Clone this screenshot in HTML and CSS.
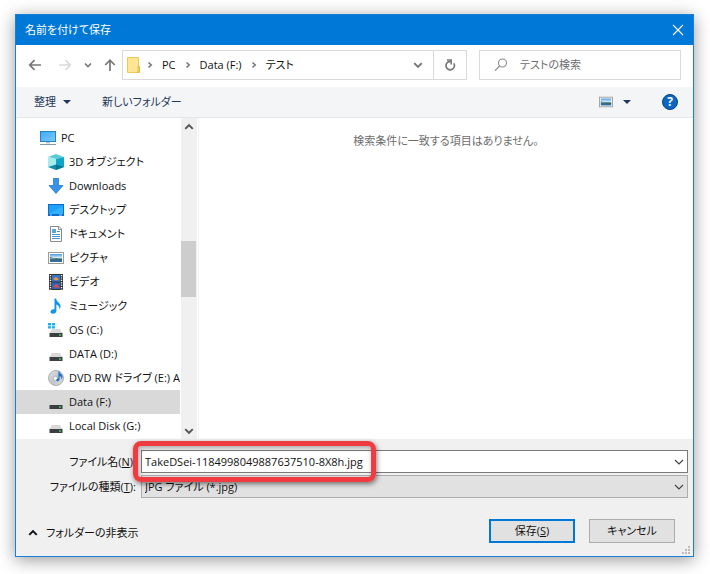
FILE: index.html
```html
<!DOCTYPE html>
<html lang="ja">
<head>
    <meta charset="UTF-8">
    <meta name="viewport" content="width=device-width, initial-scale=1.0">
    <title>名前を付けて保存</title>
    <link rel="stylesheet" href="styles.css">
</head>
<body>
    <svg class="defs" width="0" height="0" aria-hidden="true">
        <defs>
            <linearGradient id="screen" x1="0" y1="0" x2="1" y2="1">
                <stop offset="0" stop-color="#3fa9f5"/>
                <stop offset="1" stop-color="#7ccbfb"/>
            </linearGradient>
            <linearGradient id="sky" x1="0" y1="0" x2="0" y2="1">
                <stop offset="0" stop-color="#4a9be0"/>
                <stop offset="0.5" stop-color="#e2f2fb"/>
                <stop offset="0.6" stop-color="#3c6e78"/>
                <stop offset="1" stop-color="#2f6fae"/>
            </linearGradient>
            <linearGradient id="disc" x1="0" y1="0" x2="1" y2="1">
                <stop offset="0" stop-color="#e8e8e8"/>
                <stop offset="0.5" stop-color="#bfc5ca"/>
                <stop offset="1" stop-color="#dedede"/>
            </linearGradient>
            <symbol id="chevron" viewBox="0 0 8 8">
                <path d="M1 2.5 L4 5.5 L7 2.5" fill="none" stroke="currentColor" stroke-width="1.6"/>
            </symbol>
            <symbol id="chevron-right" viewBox="0 0 8 8">
                <path d="M2.5 1.5 L5.2 4 L2.5 6.5" fill="none" stroke="currentColor" stroke-width="1.6"/>
            </symbol>
            <symbol id="chevron-thin" viewBox="0 0 10 10">
                <path d="M1 3 L5 7 L9 3" fill="none" stroke="currentColor" stroke-width="1.2"/>
            </symbol>
            <symbol id="picture" viewBox="0 0 16 16">
                <rect x="0.5" y="2.5" width="15" height="11" fill="#fff" stroke="#9a9a9a"/>
                <rect x="2" y="4" width="12" height="8" fill="url(#sky)"/>
                <path d="M2 8 Q5 7 8 9 L14 10 V9.4 Q9 9 2 7z" fill="#2b5b46"/>
            </symbol>
            <symbol id="drive" viewBox="0 0 16 16">
                <path d="M4 7 H12 L14.5 11 H1.5z" fill="#d9d9d9"/>
                <rect x="1.5" y="11" width="13" height="4" fill="#3c3f42"/>
                <rect x="11" y="12.4" width="2" height="1.3" fill="#3fe25c"/>
            </symbol>
        </defs>
    </svg>

    <div class="dialog" role="dialog" aria-labelledby="dialog-title">
        <header class="title-bar">
            <h1 id="dialog-title">名前を付けて保存</h1>
            <button class="close-btn" type="button" aria-label="閉じる">
                <svg width="12" height="12" viewBox="0 0 12 12"><path d="M1 1 L11 11 M11 1 L1 11" stroke="#fff" stroke-width="1.1"/></svg>
            </button>
        </header>

        <nav class="address-row">
            <div class="nav-buttons">
                <button type="button" aria-label="戻る">
                    <svg width="14" height="12" viewBox="0 0 14 12"><path d="M13 6 H2 M6.5 1.2 L1.7 6 L6.5 10.8" fill="none" stroke="#777" stroke-width="1.7"/></svg>
                </button>
                <button type="button" aria-label="進む" disabled>
                    <svg width="14" height="12" viewBox="0 0 14 12"><path d="M1 6 H12 M7.5 1.2 L12.3 6 L7.5 10.8" fill="none" stroke="#dadada" stroke-width="1.7"/></svg>
                </button>
                <button class="history-btn" type="button" aria-label="最近表示した場所">
                    <svg width="8" height="8"><use href="#chevron"/></svg>
                </button>
                <button class="up-btn" type="button" aria-label="上へ">
                    <svg width="12" height="14" viewBox="0 0 12 14"><path d="M6 13 V2.5 M1.2 7 L6 2.2 L10.8 7" fill="none" stroke="#777" stroke-width="1.7"/></svg>
                </button>
            </div>
            <div class="address-bar">
                <svg class="folder-icon" width="14" height="16" viewBox="0 0 14 16">
                    <path d="M0.5 0.5 H11.5 V15.5 H0.5z" fill="#ffe594" stroke="#efca58"/>
                    <path d="M11 9.5 H12.5 V15.5 H11z" fill="#fbe08a" stroke="#e0b83c"/>
                </svg>
                <ol class="crumbs">
                    <li><svg width="8" height="8"><use href="#chevron-right"/></svg><a href="#">PC</a></li>
                    <li><svg width="8" height="8"><use href="#chevron-right"/></svg><a href="#">Data (F:)</a></li>
                    <li><svg width="8" height="8"><use href="#chevron-right"/></svg><a href="#">テスト</a></li>
                </ol>
                <button class="drop-btn" type="button" aria-label="以前の場所">
                    <svg width="10" height="10"><use href="#chevron"/></svg>
                </button>
                <button class="refresh-btn" type="button" aria-label="最新の情報に更新">
                    <svg width="12" height="12" viewBox="0 0 12 12">
                        <path d="M9.8 4.4 A4.2 4.2 0 1 1 4.4 2.8 L7.2 2.4" fill="none" stroke="#777" stroke-width="1.7"/>
                        <path d="M3 1 H7.2 V5.4" fill="none" stroke="#777" stroke-width="1.5"/>
                    </svg>
                </button>
            </div>
            <label class="search-box">
                <svg width="14" height="14" viewBox="0 0 14 14"><circle cx="8.5" cy="5" r="4" fill="none" stroke="#8a8a8a" stroke-width="1.1"/><path d="M5.6 8 L1 12.6" stroke="#8a8a8a" stroke-width="1.2"/></svg>
                <input type="search" placeholder="テストの検索" aria-label="テストの検索">
            </label>
        </nav>

        <div class="toolbar">
            <button type="button">整理<span class="caret"></span></button>
            <button type="button">新しいフォルダー</button>
            <button class="view-btn" type="button" aria-label="表示方法">
                <svg width="14" height="14"><use href="#picture"/></svg><span class="caret"></span>
            </button>
            <button class="help-btn" type="button" aria-label="ヘルプ">?</button>
        </div>

        <div class="content">
            <div class="sidebar">
                <ul class="tree">
                    <li class="root"><a href="#">
                        <svg width="16" height="16" viewBox="0 0 16 16"><rect x="0.5" y="1.5" width="15" height="10" fill="url(#screen)" stroke="#2584c6"/><rect x="6" y="12" width="4" height="1.5" fill="#b7c3cc"/><rect x="0" y="14" width="16" height="1" fill="#8399a8"/></svg>
                        PC</a></li>
                    <li><a href="#">
                        <svg width="16" height="16" viewBox="0 0 16 16"><path d="M8 0 L16 3 L8 5 L0 3z" fill="#58cbd8"/><path d="M0 3 L8 5 V16 L0 13z" fill="#a5ecef"/><path d="M8 5 L16 3 V13 L8 16z" fill="#0fa5c4"/><path d="M0 13 L8 10.6 V16z" fill="#128ba6"/><path d="M8 10.6 L16 13 L8 16z" fill="#0a7691"/></svg>
                        3D オブジェクト</a></li>
                    <li><a href="#">
                        <svg width="16" height="16" viewBox="0 0 16 16"><path d="M5.5 0.5 H10.5 V7.5 H15 L8 15.5 L1 7.5 H5.5z" fill="#3793e8" stroke="#2a7bd0" stroke-width="0.8"/></svg>
                        Downloads</a></li>
                    <li><a href="#">
                        <svg width="16" height="16" viewBox="0 0 16 16"><rect x="0" y="2" width="16" height="12" fill="#0b6fd0"/><rect x="1" y="3" width="14" height="9" fill="#1ea0fb"/><path d="M1 12 L15 4 V12z" fill="#31b1ff"/><path d="M2 13 H4 M11 13 H14" stroke="#cfe9ff" stroke-width="0.8"/></svg>
                        デスクトップ</a></li>
                    <li><a href="#">
                        <svg width="16" height="16" viewBox="0 0 16 16"><path d="M2.5 0.5 H11 L13.5 3 V15.5 H2.5z" fill="#fff" stroke="#8b8b8b"/><path d="M10.5 0.5 V3.5 H13.5" fill="none" stroke="#8b8b8b"/><rect x="4" y="3" width="4" height="4" fill="#54a6df"/><path d="M9 5.5 H12 M4 8.5 H12 M4 10.5 H12 M4 12.5 H12" stroke="#4a94cc"/></svg>
                        ドキュメント</a></li>
                    <li><a href="#">
                        <svg width="16" height="16"><use href="#picture"/></svg>
                        ピクチャ</a></li>
                    <li><a href="#">
                        <svg width="16" height="16" viewBox="0 0 16 16"><rect x="1" y="0" width="14" height="16" fill="#333"/><path d="M2.5 1 V16 M13.5 1 V16" stroke="#fff" stroke-width="1.4" stroke-dasharray="1.2 1.2"/><rect x="4" y="1" width="8" height="6.5" fill="#3974c9"/><rect x="4" y="8.5" width="8" height="6.5" fill="#2e62b8"/><path d="M5 5 L8 3 L11 5.5 L8 6.5z" fill="#e39a3b"/><path d="M5 13 L8 10 L10 11 L11 14z" fill="#d9513e"/></svg>
                        ビデオ</a></li>
                    <li><a href="#">
                        <svg width="16" height="16" viewBox="0 0 16 16"><path d="M6.5 0.5 H8 Q8.4 3 11 5 Q14 7.6 11.4 11.5 Q12 7.6 8.4 6.4 V12.8 Q8 15.6 5 15.8 Q2.2 15.6 2.6 13.2 Q3.4 10.8 6.5 11.2z" fill="#0f95f0"/></svg>
                        ミュージック</a></li>
                    <li><a href="#">
                        <svg width="16" height="16" viewBox="0 0 16 16"><use href="#drive"/><path d="M0 1 H3 V3.4 H0z M4 1 H7 V3.4 H4z M0 4.2 H3 V6.6 H0z M4 4.2 H7 V6.6 H4z" fill="#15b4f1"/></svg>
                        OS (C:)</a></li>
                    <li><a href="#">
                        <svg width="16" height="16"><use href="#drive"/></svg>
                        DATA (D:)</a></li>
                    <li><a href="#">
                        <svg width="16" height="16" viewBox="0 0 16 16"><circle cx="8" cy="8" r="7.5" fill="url(#disc)" stroke="#9a9fa3" stroke-width="0.8"/><circle cx="7.5" cy="8.5" r="2.2" fill="#fff" stroke="#a4aaae" stroke-width="0.8"/><path d="M11 1.5 Q12 3.6 14 5 Q15.4 7.4 13.4 9.4 Q13.8 6.6 11.6 5.8 V9.6 Q10.8 11.8 8.8 11.2 Q7.6 10 9 8.8 L10.4 8.6 V1.5z" fill="#1f6fc9"/></svg>
                        DVD RW ドライブ (E:) A</a></li>
                    <li class="selected"><a href="#" aria-current="true">
                        <svg width="16" height="16"><use href="#drive"/></svg>
                        Data (F:)</a></li>
                    <li><a href="#">
                        <svg width="16" height="16"><use href="#drive"/></svg>
                        Local Disk (G:)</a></li>
                </ul>
                <div class="scrollbar">
                    <button type="button" aria-label="上にスクロール"><svg class="flip" width="10" height="10"><use href="#chevron"/></svg></button>
                    <div class="track">
                        <div class="space-above"></div>
                        <div class="thumb"></div>
                        <div class="space-below"></div>
                    </div>
                    <button type="button" aria-label="下にスクロール"><svg width="10" height="10"><use href="#chevron"/></svg></button>
                </div>
            </div>
            <main class="file-list">
                <p>検索条件に一致する項目はありません。</p>
            </main>
        </div>

        <form class="save-form">
            <div class="fields">
                <label for="file-name">ファイル名(<u>N</u>):</label>
                <div class="combo name-combo">
                    <input type="text" id="file-name" name="fileName" value="TakeDSei-1184998049887637510-8X8h.jpg">
                    <svg width="10" height="10"><use href="#chevron-thin"/></svg>
                    <span class="highlight"></span>
                </div>
                <label for="file-type">ファイルの種類(<u>T</u>):</label>
                <div class="combo type-combo">
                    <select id="file-type" name="fileType">
                        <option>JPG ファイル (*.jpg)</option>
                    </select>
                    <svg width="10" height="10"><use href="#chevron-thin"/></svg>
                </div>
            </div>
            <div class="actions">
                <button class="hide-folders" type="button">
                    <svg class="flip" width="10" height="10"><use href="#chevron"/></svg>フォルダーの非表示
                </button>
                <button class="btn btn-default" type="submit">保存(<u>S</u>)</button>
                <button class="btn" type="button">キャンセル</button>
            </div>
            <svg class="grip" width="8" height="8" viewBox="0 0 8 8"><path d="M6 0h2v2h-2z M3 3h2v2h-2z M6 3h2v2h-2z M0 6h2v2h-2z M3 6h2v2h-2z M6 6h2v2h-2z" fill="#bdbdbd"/></svg>
        </form>
    </div>
</body>
</html>
```
FILE: styles.css
```css
* {
    box-sizing: border-box;
}
body {
    margin: 0;
    padding: 14px 16px 17px 15px;
    background-color: white;
    color: #111;
}
body, button, input, select {
    font-family: "Open Sans", "Noto Sans CJK JP", sans-serif;
    font-size: 11px;
    line-height: 16px;
    font-feature-settings: "palt";
}
button {
    display: flex;
    align-items: center;
    padding: 0;
    border: none;
    background: none;
    color: inherit;
}
a {
    color: inherit;
    text-decoration: none;
}
svg {
    flex: none;
}
ul, ol {
    list-style: none;
    margin: 0;
    padding: 0;
}
.defs {
    position: absolute;
}
.flip {
    transform: rotate(180deg);
}
.dialog {
    border: 1px solid #1a7fd6;
    background-color: white;
    box-shadow: 0 3px 16px rgba(0, 0, 0, 0.4);
}

/* title bar */
.title-bar {
    display: flex;
    align-items: center;
    justify-content: space-between;
    height: 30px;
    padding: 0 9px;
    background-color: #0078d7;
    color: white;
}
.title-bar h1 {
    margin: 0;
    font-size: 11px;
    font-weight: normal;
}

/* address row */
.address-row {
    display: flex;
    gap: 12px;
    padding: 5px 12px 7px;
}
.nav-buttons {
    display: flex;
    align-items: center;
    width: 82px;
    gap: 16px;
    color: #777;
}
.history-btn, .up-btn {
    margin-left: -4px;
}
.address-bar {
    display: flex;
    align-items: center;
    flex: 1;
    height: 30px;
    border: 1px solid #d9d9d9;
}
.folder-icon {
    margin: 0 5px 0 4px;
}
.crumbs {
    display: flex;
    flex: 1;
    gap: 8px;
}
.crumbs li {
    display: flex;
    align-items: center;
    gap: 8px;
}
.crumbs svg, .drop-btn {
    color: #777;
}
.drop-btn {
    padding: 0 10px;
}
.refresh-btn {
    justify-content: center;
    width: 33px;
    height: 28px;
    border-left: 1px solid #d9d9d9;
}
.search-box {
    display: flex;
    align-items: center;
    gap: 12px;
    width: 202px;
    height: 30px;
    padding: 0 14px;
    border: 1px solid #d9d9d9;
}
.search-box input {
    flex: 1;
    min-width: 0;
    padding: 0;
    border: none;
    outline: none;
}
.search-box input::placeholder {
    color: #6d6d6d;
}

/* toolbar */
.toolbar {
    display: flex;
    align-items: center;
    gap: 31px;
    height: 31px;
    padding: 0 15px 0 18px;
    background-color: #f4f5f7;
    border-bottom: 1px solid #e6e7e9;
    color: #1e395b;
}
.caret {
    margin-left: 7px;
    border: 4px solid transparent;
    border-top-color: #1e395b;
    border-bottom: none;
}
.view-btn {
    margin-left: auto;
}
.view-btn .caret {
    margin-left: 10px;
}
.help-btn {
    justify-content: center;
    width: 16px;
    height: 16px;
    border: 1px solid #06458a;
    border-radius: 50%;
    background-color: #0a66c0;
    color: white;
    font-size: 12px;
    font-weight: bold;
}

/* folder tree and file list */
.content {
    display: flex;
}
.sidebar {
    display: flex;
    width: 183px;
    border-right: 1px solid #f2f2f2;
}
.tree {
    flex: 1;
    min-width: 0;
    padding: 8px 0 1px;
}
.tree a {
    display: flex;
    align-items: center;
    gap: 5px;
    height: 24px;
    padding-left: 32px;
    overflow: hidden;
    white-space: nowrap;
}
.tree .root a {
    padding-left: 24px;
}
.tree .selected {
    background-color: #d9d9d9;
}
.scrollbar {
    display: flex;
    flex-direction: column;
    width: 16px;
    margin: 0 1px;
    background-color: #f0f0f0;
    color: #555;
}
.scrollbar button {
    justify-content: center;
    height: 17px;
}
.track {
    display: flex;
    flex-direction: column;
    flex: 1;
}
.space-above {
    flex: 106;
}
.thumb {
    flex: 56;
    margin-right: 1px;
    background-color: #cdcdcd;
}
.space-below {
    flex: 125;
}
.file-list {
    flex: 1;
    text-align: center;
    color: #6d6d6d;
}
.file-list p {
    margin: 15px 0;
}

/* file name, file type and buttons */
.save-form {
    position: relative;
    padding: 11px 5px 13px 12px;
    background-color: #f0f0f0;
}
.fields {
    display: grid;
    grid-template-columns: 108px 1fr;
    gap: 2px 5px;
    align-items: center;
}
.fields label {
    text-align: right;
    white-space: nowrap;
}
.combo {
    position: relative;
    display: flex;
    align-items: center;
    height: 23px;
    padding-right: 3px;
    border: 1px solid #7a7a7a;
    background-color: white;
    color: #444;
}
.combo input, .combo select {
    flex: 1;
    min-width: 0;
    height: 21px;
    padding: 0 3px;
    border: none;
    outline: none;
    appearance: none;
    background: none;
    color: #111;
}
.type-combo {
    border-color: #adadad;
    background-color: #e1e1e1;
}
.highlight {
    position: absolute;
    top: -10px;
    left: -9px;
    z-index: 1;
    width: 243px;
    height: 41px;
    border: 5px solid #f03c40;
    border-radius: 8px;
    box-shadow: 1px 2px 5px rgba(0, 0, 0, 0.5), inset 1px 2px 5px rgba(0, 0, 0, 0.3);
    pointer-events: none;
}
.actions {
    display: flex;
    align-items: center;
    gap: 14px;
    margin-top: 21px;
    padding-right: 13px;
}
.hide-folders {
    gap: 8px;
    margin-right: auto;
    padding-top: 4px;
}
.btn {
    justify-content: center;
    width: 86px;
    height: 24px;
    border: 1px solid #adadad;
    background-color: #e1e1e1;
}
.btn-default {
    border: 2px solid #0078d7;
}
.grip {
    position: absolute;
    right: 3px;
    bottom: 2px;
}
```
